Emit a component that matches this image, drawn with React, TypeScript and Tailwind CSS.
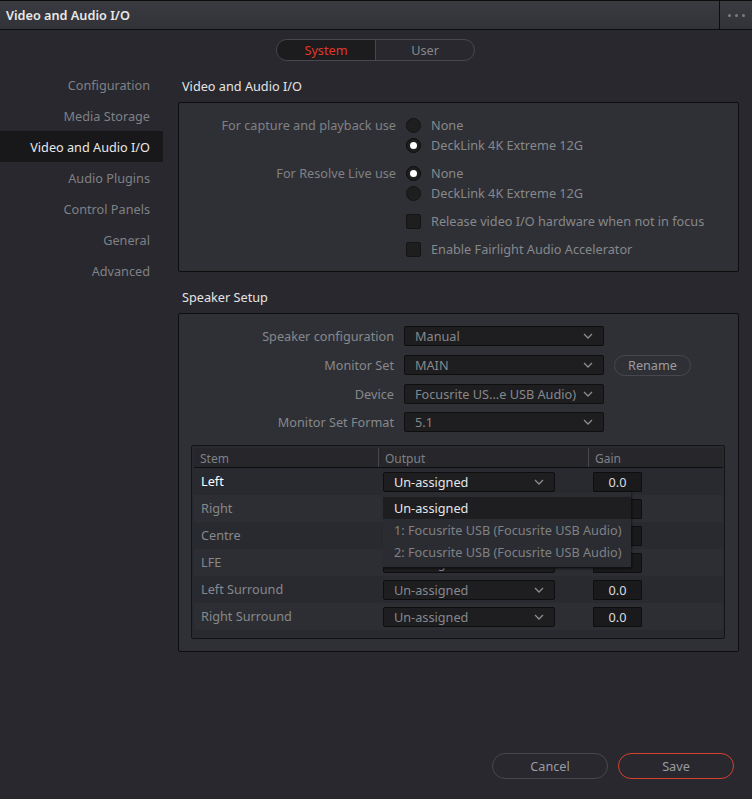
import React from "react";

const navItems = ["Configuration", "Media Storage", "Video and Audio I/O", "Audio Plugins", "Control Panels", "General", "Advanced"];

function Chevron() {
  return (
    <svg width="10" height="6" viewBox="0 0 10 6" fill="none" className="shrink-0">
      <path d="M1 1l4 4 4-4" stroke="#8a8d92" strokeWidth="1.3" />
    </svg>
  );
}

function Radio({ on, label }: { on?: boolean; label: string }) {
  return (
    <div className="flex items-center h-5">
      <span className={`w-[15px] h-[15px] rounded-full flex items-center justify-center bg-[#1e1e1f] border ${on ? "border-[#0c0c0d]" : "border-[#141415]"}`}>
        {on && <span className="w-[7px] h-[7px] rounded-full bg-white" />}
      </span>
      <span className="ml-[10px] text-[#86888c]">{label}</span>
    </div>
  );
}

function Check({ label }: { label: string }) {
  return (
    <div className="flex items-center h-5">
      <span className="w-[15px] h-[15px] rounded-[2px] bg-[#1e1e1f] border border-[#141415]" />
      <span className="ml-[10px] text-[#86888c]">{label}</span>
    </div>
  );
}

function Select({ value, className }: { value: string; className?: string }) {
  return (
    <div className={`h-5 w-[200px] flex items-center justify-between pl-[10px] pr-[10px] rounded-[2px] bg-[#1e1e20] border border-[#0e0e0f] text-[#86888c] ${className ?? ""}`}>
      <span>{value}</span>
      <Chevron />
    </div>
  );
}

function SpeakerRow({ label, value, extra, mb }: { label: string; value: string; extra?: React.ReactNode; mb: string }) {
  return (
    <div className={`flex items-center h-5 ${mb}`}>
      <span className="w-[203px] text-right text-[#86888c]">{label}</span>
      <Select value={value} className="ml-[10px]" />
      {extra}
    </div>
  );
}

const stems = ["Left", "Right", "Centre", "LFE", "Left Surround", "Right Surround"];

function StemRow({ name, index }: { name: string; index: number }) {
  const active = index === 0;
  return (
    <div className={`h-[27px] flex items-center ${index % 2 === 0 ? "bg-[#292a2f]" : "bg-[#2d2e33]"}`}>
      <span className={`w-[189px] pl-[7px] pb-[2px] ${active ? "text-white" : "text-[#86888c]"}`}>{name}</span>
      <div className={`w-[172px] h-5 flex items-center justify-between pl-[10px] pr-[10px] rounded-[2px] bg-[#1e1e20] border border-[#0e0e0f] ${active ? "text-[#e6e6e6]" : "text-[#86888c]"}`}>
        <span>Un-assigned</span>
        <Chevron />
      </div>
      <div className="ml-[38px] w-[49px] h-5 flex items-center justify-center rounded-[1px] bg-[#1a1a1c] border border-[#0e0e0f] text-[#dcdcdc]">0.0</div>
    </div>
  );
}

export default function App() {
  return (
    <div className="w-[752px] h-[799px] flex flex-col bg-[#28282e] text-[12.7px] leading-5 overflow-hidden" style={{ fontFamily: '"Noto Sans", sans-serif' }}>
      <header className="h-[30px] shrink-0 flex border-t border-b border-[#0d0d0e] bg-gradient-to-b from-[#3a3b40] to-[#323338]">
        <div className="flex-1 flex items-center pl-[6px] font-semibold text-[#e8e8e8]">Video and Audio I/O</div>
        <div className="w-[33px] border-l border-[#0d0d0e] flex items-center justify-center gap-[4px]">
          <span className="w-[3px] h-[3px] rounded-full bg-[#7b7c80]" />
          <span className="w-[3px] h-[3px] rounded-full bg-[#7b7c80]" />
          <span className="w-[3px] h-[3px] rounded-full bg-[#7b7c80]" />
        </div>
      </header>

      <div className="flex justify-start pl-[276px] pt-[9px] shrink-0">
        <div className="w-[199px] h-[22px] flex rounded-full border border-[#47484d] overflow-hidden">
          <div className="w-[99px] bg-[#1c1c1e] border-r border-[#47484d] text-[#e0362c] flex items-center justify-center">System</div>
          <div className="flex-1 text-[#86888c] flex items-center justify-center">User</div>
        </div>
      </div>

      <div className="flex flex-1 pt-[8px]">
        <nav className="w-[163px] shrink-0 flex flex-col">
          {navItems.map((n) => (
            <div key={n} className={`h-[31px] flex items-center justify-end pr-[13px] ${n === "Video and Audio I/O" ? "bg-[#18181a] text-[#e8e8e8]" : "text-[#7f8185]"}`}>
              {n}
            </div>
          ))}
        </nav>

        <main className="w-[561px] ml-[15px]">
          <h2 className="h-[23px] pl-[4px] flex items-center text-[#e4e4e4] font-normal mt-[5px]">Video and Audio I/O</h2>
          <section className="mt-[5px] h-[170px] rounded-[2px] border border-[#0d0d0e] bg-[#2f3035] pt-[12px]">
            <div className="flex">
              <span className="w-[217px] text-right text-[#7f8185]">For capture and playback use</span>
              <div className="ml-[10px]">
                <Radio label="None" />
                <Radio on label="DeckLink 4K Extreme 12G" />
              </div>
            </div>
            <div className="flex mt-[8px]">
              <span className="w-[217px] text-right text-[#7f8185]">For Resolve Live use</span>
              <div className="ml-[10px]">
                <Radio on label="None" />
                <Radio label="DeckLink 4K Extreme 12G" />
              </div>
            </div>
            <div className="pl-[227px] mt-[8px]">
              <Check label="Release video I/O hardware when not in focus" />
              <div className="mt-[8px]">
                <Check label="Enable Fairlight Audio Accelerator" />
              </div>
            </div>
          </section>

          <h2 className="h-[23px] pl-[4px] flex items-center text-[#e4e4e4] font-normal mt-[13px]">Speaker Setup</h2>
          <section className="mt-[5px] h-[339px] rounded-[2px] border border-[#0d0d0e] bg-[#2f3035] pt-[12px] px-[12px]">
            <div>
              <SpeakerRow label="Speaker configuration" value="Manual" mb="mb-[9px]" />
              <SpeakerRow
                label="Monitor Set"
                value="MAIN"
                mb="mb-[9px]"
                extra={
                  <div className="ml-[10px] w-[77px] h-[21px] rounded-full border border-[#47484d] text-[#9a9ca0] flex items-center justify-center">Rename</div>
                }
              />
              <SpeakerRow label="Device" value="Focusrite US...e USB Audio)" mb="mb-[8px]" />
              <SpeakerRow label="Monitor Set Format" value="5.1" mb="mb-0" />
            </div>

            <div className="mt-[13px] w-[534px] h-[194px] rounded-[2px] border border-[#141416] bg-[#292a2f] pt-[2px] pl-[2px] pr-px relative">
              <div className="h-[20px] flex items-center border-b border-[#0d0d0e] bg-[#26262b] text-[12px] text-[#7f8185]">
                <div className="w-[185px] pl-[6px] pt-[2px] h-full flex items-center border-r border-[#47484d]">Stem</div>
                <div className="w-[210px] pl-[6px] pt-[2px] h-full flex items-center border-r border-[#47484d]">Output</div>
                <div className="pl-[6px] pt-[2px]">Gain</div>
              </div>
              <div>
                {stems.map((s, i) => (
                  <StemRow key={s} name={s} index={i} />
                ))}
              </div>
              <div className="absolute left-[191px] top-[46px] w-[248px] h-[76px] bg-[#2b2c31] border-b border-[#111113] pt-[5px] shadow-[1px_1px_2px_rgba(0,0,0,0.5)]">
                <div className="h-[22px] pl-[11px] flex items-center bg-[#1e1e20] text-[#e6e6e6]">Un-assigned</div>
                <div className="h-[22px] pl-[11px] flex items-center text-[#7f8185]">1: Focusrite USB (Focusrite USB Audio)</div>
                <div className="h-[22px] pl-[11px] flex items-center text-[#7f8185]">2: Focusrite USB (Focusrite USB Audio)</div>
              </div>
            </div>
          </section>

          <div className="mt-[101px] flex justify-end gap-[10px] pr-[5px]">
            <button className="w-[116px] h-[26px] rounded-full border border-[#47484d] text-[#9a9ca0]">Cancel</button>
            <button className="w-[116px] h-[26px] rounded-full border border-[#d8402f] text-[#9a9ca0]">Save</button>
          </div>
        </main>
      </div>
    </div>
  );
}
